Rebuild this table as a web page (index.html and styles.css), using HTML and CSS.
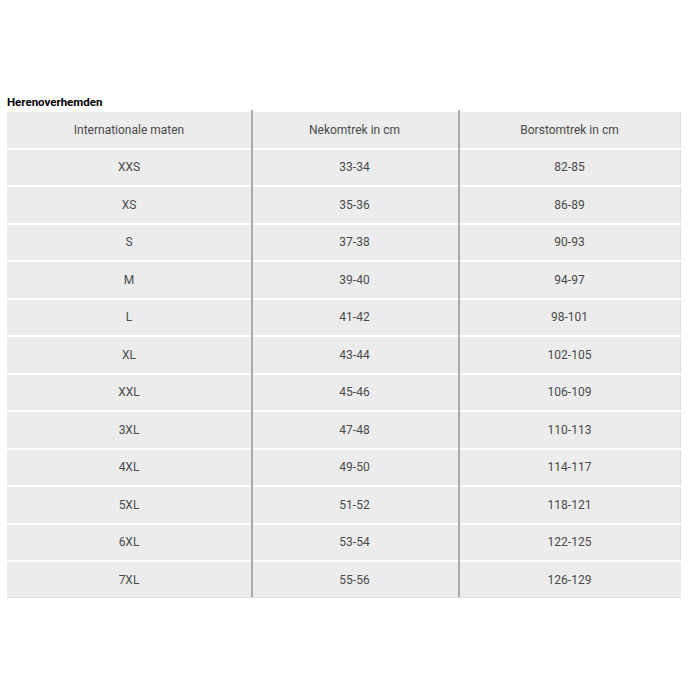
FILE: index.html
```html
<!DOCTYPE html>
<html lang="nl">
<head>
<meta charset="utf-8">
<link rel="stylesheet" href="styles.css">
</head>
<body>
<div class="page">
  <h2 class="title">Herenoverhemden</h2>
  <table class="sizes">
    <colgroup><col class="c1"><col class="c2"><col class="c3"></colgroup>
    <thead>
      <tr><th>Internationale maten</th><th>Nekomtrek in cm</th><th>Borstomtrek in cm</th></tr>
    </thead>
    <tbody>
      <tr><td>XXS</td><td>33-34</td><td>82-85</td></tr>
      <tr><td>XS</td><td>35-36</td><td>86-89</td></tr>
      <tr><td>S</td><td>37-38</td><td>90-93</td></tr>
      <tr><td>M</td><td>39-40</td><td>94-97</td></tr>
      <tr><td>L</td><td>41-42</td><td>98-101</td></tr>
      <tr><td>XL</td><td>43-44</td><td>102-105</td></tr>
      <tr><td>XXL</td><td>45-46</td><td>106-109</td></tr>
      <tr><td>3XL</td><td>47-48</td><td>110-113</td></tr>
      <tr><td>4XL</td><td>49-50</td><td>114-117</td></tr>
      <tr><td>5XL</td><td>51-52</td><td>118-121</td></tr>
      <tr><td>6XL</td><td>53-54</td><td>122-125</td></tr>
      <tr><td>7XL</td><td>55-56</td><td>126-129</td></tr>
    </tbody>
  </table>
</div>
</body>
</html>
```

FILE: styles.css
```css
html, body {
  margin: 0;
  padding: 0;
  background: #fff;
}
.page {
  padding: 94px 0 0 7px;
  font-family: Roboto, "Liberation Sans", sans-serif;
}
.title {
  margin: 0;
  font-size: 11.5px;
  line-height: 16px;
  font-weight: 700;
  color: #000;
}
.sizes {
  border-collapse: separate;
  border-spacing: 0;
  width: 674px;
  table-layout: fixed;
}
.c1 { width: 244px; }
.c2 { width: 207px; }
.c3 { width: 223px; }
.sizes th,
.sizes td {
  height: 35.5px;
  padding: 0;
  text-align: center;
  vertical-align: middle;
  font-size: 12px;
  font-weight: 400;
  color: #4a4a4a;
  border-top: 2px solid transparent;
  background: #ececec padding-box;
}
.sizes th + th,
.sizes td + td {
  background:
    linear-gradient(#ababab, #ababab) 0 0 / 2px 100% no-repeat border-box,
    #ececec padding-box;
}
.sizes th:last-child,
.sizes td:last-child {
  box-shadow: inset -1px 0 0 #e0e0e0;
}
.sizes tbody tr:last-child td {
  box-shadow: inset 0 -1px 0 #e0e0e0;
}
```
